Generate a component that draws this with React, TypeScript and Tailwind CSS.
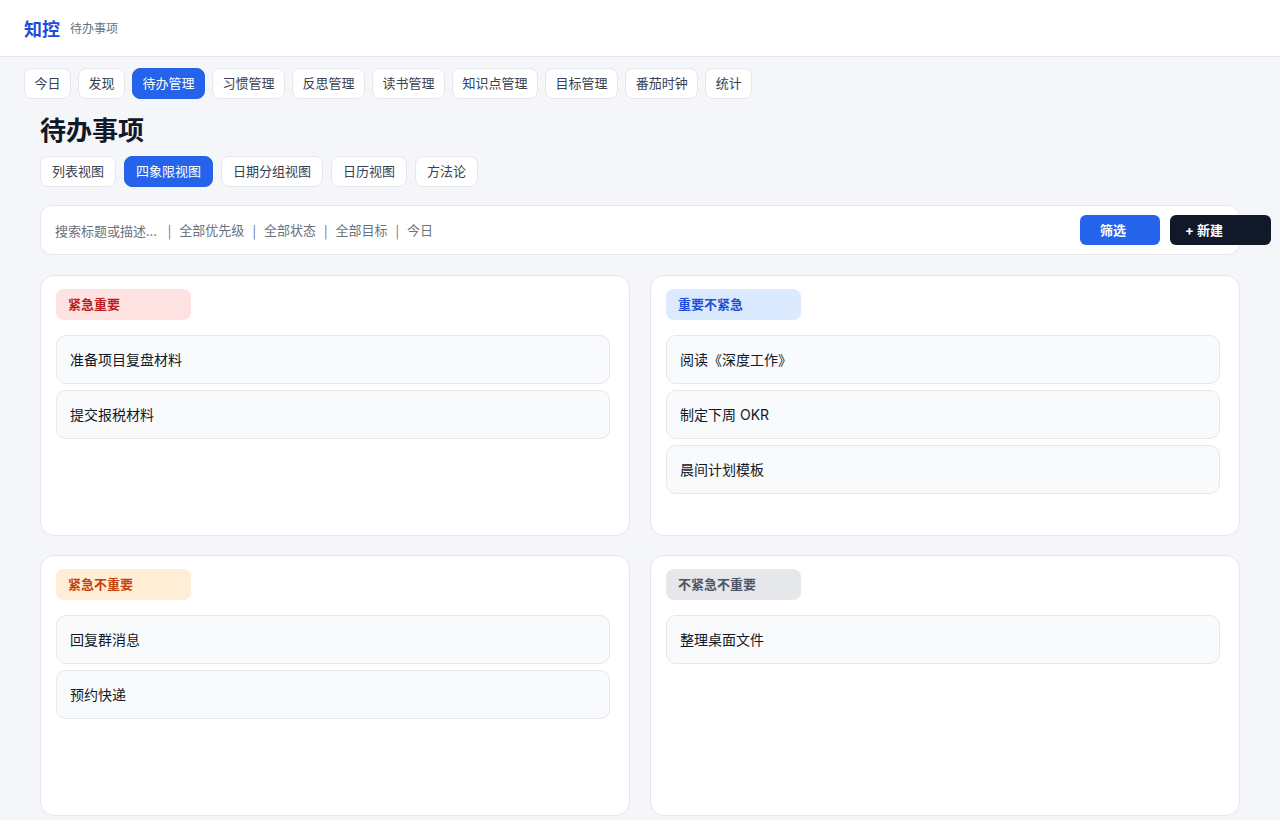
import { useState } from "react";

const NAV = ["今日", "发现", "待办管理", "习惯管理", "反思管理", "读书管理", "知识点管理", "目标管理", "番茄时钟", "统计"];
const VIEWS = ["列表视图", "四象限视图", "日期分组视图", "日历视图", "方法论"];
const FILTERS = ["全部优先级", "全部状态", "全部目标", "今日"];

type Quadrant = {
  title: string;
  badge: string;
  items: string[];
};

const QUADRANTS: Quadrant[] = [
  { title: "紧急重要", badge: "bg-[#fee2e2] text-[#b91c1c]", items: ["准备项目复盘材料", "提交报税材料"] },
  { title: "重要不紧急", badge: "bg-[#dbeafe] text-[#1d4ed8]", items: ["阅读《深度工作》", "制定下周 OKR", "晨间计划模板"] },
  { title: "紧急不重要", badge: "bg-[#ffedd5] text-[#c2410c]", items: ["回复群消息", "预约快递"] },
  { title: "不紧急不重要", badge: "bg-[#e5e7eb] text-[#4b5563]", items: ["整理桌面文件"] },
];

const FONT = "font-['Inter','Noto_Sans_CJK_SC',sans-serif]";

export default function App() {
  const [nav, setNav] = useState("待办管理");
  const [view, setView] = useState("四象限视图");

  return (
    <div className={`min-h-screen bg-[#f5f6fa] text-[#111827] ${FONT}`}>
      {/* ── Top bar ─────────────────────────── */}
      <header className="h-[57px] bg-white border-b border-[#e5e7eb] flex items-center px-6 gap-[10px]">
        <span className="text-[18px] font-bold text-[#1d4ed8] leading-none mt-[3px]">知控</span>
        <span className="text-[12px] text-[#6b7280] leading-none mt-[1px]">待办事项</span>
      </header>

      {/* ── Module nav ──────────────────────── */}
      <nav className="flex gap-[7px] px-6 pt-[11px]">
        {NAV.map((n) => (
          <button
            key={n}
            onClick={() => setNav(n)}
            className={
              "h-[31px] px-[9.5px] rounded-[8px] border text-[13px] leading-none flex items-center " +
              (n === nav
                ? "bg-[#2563eb] border-[#2563eb] text-white"
                : "bg-white border-[#e5e7eb] text-[#374151]")
            }
          >
            {n}
          </button>
        ))}
      </nav>

      <main className="px-10">
        <h1 className="mt-[15px] text-[26px] leading-[34px] font-bold text-[#111827]">待办事项</h1>

        {/* view switcher */}
        <div className="flex gap-[8px] mt-[8px]">
          {VIEWS.map((v) => (
            <button
              key={v}
              onClick={() => setView(v)}
              className={
                "h-[31px] px-[11px] rounded-[8px] border text-[13px] leading-none flex items-center " +
                (v === view
                  ? "bg-[#2563eb] border-[#2563eb] text-white"
                  : "bg-white border-[#e5e7eb] text-[#374151]")
              }
            >
              {v}
            </button>
          ))}
        </div>

        {/* search + filters */}
        <div className="mt-[18px] h-[50px] bg-white border border-[#e5e7eb] rounded-[12px] flex items-center pl-[14px]">
          <div className="w-[1025px] shrink-0 flex items-center text-[13px] text-[#6b7280] pt-[2px]">
            <span className="font-['Noto_Sans_CJK_SC',sans-serif] mr-[3px]">搜索标题或描述...</span>
            {FILTERS.map((f) => (
              <span key={f} className="flex items-center">
                <span className="mx-[8px] text-[#6b7280] font-['Noto_Sans_CJK_SC',sans-serif]">|</span>
                <span>{f}</span>
              </span>
            ))}
          </div>
          <div className="flex gap-[10px] shrink-0">
            <button className="w-[80px] h-[30px] rounded-[6px] bg-[#2563eb] text-white text-[13px] font-bold text-left pl-[20px] pt-[2px]">
              筛选
            </button>
            <button className="w-[101px] h-[30px] rounded-[6px] bg-[#111827] text-white text-[13px] font-bold text-left pl-[15px] pt-[2px]">
              + 新建
            </button>
          </div>
        </div>

        {/* quadrants */}
        <div className="grid grid-cols-2 gap-x-5 gap-y-[19px] mt-5">
          {QUADRANTS.map((q) => (
            <section
              key={q.title}
              className="h-[261px] bg-white border border-[#e5e7eb] rounded-[14px] pt-[13px] pl-[15px] pr-[19px]"
            >
              <div className={`w-[135px] h-[31px] rounded-[8px] flex items-center pl-[12px] text-[13px] font-bold ${q.badge}`}>
                {q.title}
              </div>
              <div className="mt-[15px] flex flex-col gap-[6px]">
                {q.items.map((it) => (
                  <div
                    key={it}
                    className="h-[49px] bg-[#f9fafb] border border-[#e5e7eb] rounded-[10px] flex items-center pl-[13px] text-[14px] text-[#111827]"
                  >
                    {it}
                  </div>
                ))}
              </div>
            </section>
          ))}
        </div>
      </main>
    </div>
  );
}
